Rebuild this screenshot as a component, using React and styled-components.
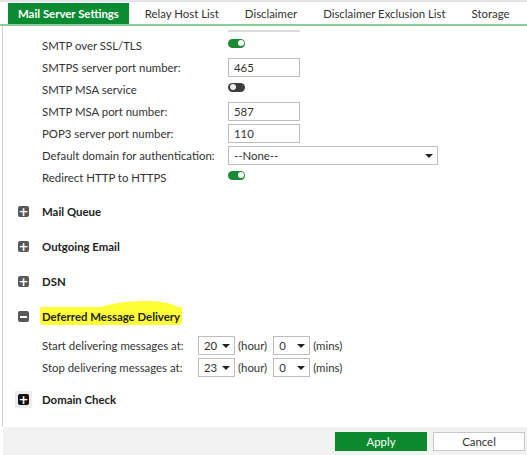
import React from "react";
import styled, { createGlobalStyle } from "styled-components";

const GlobalStyle = createGlobalStyle`
  body {
    margin: 0;
    background: #fff;
    font-family: Lato, "Open Sans", "Liberation Sans", sans-serif;
    font-size: 11.4px;
    color: #333;
  }
`;

const tabs = [
  "Mail Server Settings",
  "Relay Host List",
  "Disclaimer",
  "Disclaimer Exclusion List",
  "Storage",
];

export default function App() {
  return (
    <Page>
      <GlobalStyle />
      <TabBar>
        {tabs.map((t, i) => (
          <Tab key={t} active={i === 0}>
            {t}
          </Tab>
        ))}
      </TabBar>
      <Panel>
        <CutInput />
        <FormRow>
          <Label>SMTP over SSL/TLS</Label>
          <Toggle on />
        </FormRow>
        <FormRow>
          <Label>SMTPS server port number:</Label>
          <TextBox>465</TextBox>
        </FormRow>
        <FormRow>
          <Label>SMTP MSA service</Label>
          <Toggle />
        </FormRow>
        <FormRow>
          <Label>SMTP MSA port number:</Label>
          <TextBox>587</TextBox>
        </FormRow>
        <FormRow>
          <Label>POP3 server port number:</Label>
          <TextBox>110</TextBox>
        </FormRow>
        <FormRow>
          <Label>Default domain for authentication:</Label>
          <Select width={210}>
            --None--
            <Caret />
          </Select>
        </FormRow>
        <FormRow>
          <Label>Redirect HTTP to HTTPS</Label>
          <Toggle on />
        </FormRow>

        <Sections>
          <Section>
            <SectionIcon>+</SectionIcon>
            <SectionTitle>Mail Queue</SectionTitle>
          </Section>
          <Section>
            <SectionIcon>+</SectionIcon>
            <SectionTitle>Outgoing Email</SectionTitle>
          </Section>
          <Section>
            <SectionIcon>+</SectionIcon>
            <SectionTitle>DSN</SectionTitle>
          </Section>
          <Section>
            <SectionIcon>
              <MinusBar />
            </SectionIcon>
            <SectionTitle>
              <Highlight>Deferred Message Delivery</Highlight>
            </SectionTitle>
          </Section>

          <TimeRow>
            <TimeLabel>Start delivering messages at:</TimeLabel>
            <Select width={37}>
              20
              <Caret />
            </Select>
            <Unit>(hour)</Unit>
            <Select width={37}>
              0
              <Caret />
            </Select>
            <Unit>(mins)</Unit>
          </TimeRow>
          <TimeRow>
            <TimeLabel>Stop delivering messages at:</TimeLabel>
            <Select width={37}>
              23
              <Caret />
            </Select>
            <Unit>(hour)</Unit>
            <Select width={37}>
              0
              <Caret />
            </Select>
            <Unit>(mins)</Unit>
          </TimeRow>

          <Section spaced>
            <IconWell>
              <SectionIcon dark>+</SectionIcon>
            </IconWell>
            <SectionTitle>Domain Check</SectionTitle>
          </Section>
        </Sections>
      </Panel>
      <Footer>
        <Button primary>Apply</Button>
        <Button>Cancel</Button>
      </Footer>
    </Page>
  );
}

const Page = styled.div`
  width: 527px;
  height: 455px;
  display: flex;
  flex-direction: column;
  border-top: 2px solid #e4e4e4;
  box-sizing: border-box;
  overflow: hidden;
`;

const TabBar = styled.div`
  display: flex;
  gap: 6px;
  padding: 1px 0 0 8px;
  height: 21px;
  border-bottom: 2px solid #86cf98;
`;

const Tab = styled.div`
  display: flex;
  align-items: center;
  padding: 0 10px;
  white-space: nowrap;
  color: ${(p) => (p.active ? "#fff" : "#333")};
  background: ${(p) => (p.active ? "#0a8a32" : "transparent")};
  font-weight: ${(p) => (p.active ? 700 : 400)};
`;

const Panel = styled.div`
  flex: 1;
  border-left: 1px solid #d0d0d0;
  margin-left: 2px;
  padding: 4px 0 0 39px;
`;

const CutInput = styled.div`
  margin-left: 186px;
  width: 72px;
  height: 2px;
  background: #dcdcdc;
  margin-bottom: 2px;
`;

const FormRow = styled.div`
  display: flex;
  align-items: center;
  height: 22px;
`;

const Label = styled.div`
  width: 186px;
  white-space: nowrap;
`;

const Toggle = styled.span`
  position: relative;
  width: 17px;
  height: 9px;
  border-radius: 5px;
  background: ${(p) => (p.on ? "#1a8a34" : "#3d3d3d")};
  margin-top: -4px;
  &::after {
    content: "";
    position: absolute;
    top: 1.5px;
    ${(p) => (p.on ? "right: 1.5px;" : "left: 1.5px;")}
    width: 6px;
    height: 6px;
    border-radius: 50%;
    background: ${(p) => (p.on ? "#fff" : "#eee")};
  }
`;

const TextBox = styled.div`
  width: 72px;
  height: 19px;
  box-sizing: border-box;
  border: 1px solid #bdbdbd;
  padding: 0 5px;
  line-height: 17px;
`;

const Select = styled.div`
  position: relative;
  width: ${(p) => p.width}px;
  height: 19px;
  box-sizing: border-box;
  border: 1px solid #bdbdbd;
  padding: 0 5px;
  line-height: 17px;
  background: #fff;
`;

const Caret = styled.span`
  position: absolute;
  right: 4px;
  top: 7px;
  width: 0;
  height: 0;
  border-left: 4px solid transparent;
  border-right: 4px solid transparent;
  border-top: 4px solid #222;
`;

const Sections = styled.div`
  margin: 6px 0 0 -24px;
`;

const Section = styled.div`
  display: flex;
  align-items: center;
  height: 35px;
  ${(p) => p.spaced && "margin-top: 4px;"}
`;

const IconWell = styled.div`
  display: flex;
  align-items: center;
  justify-content: center;
  width: 17px;
  height: 17px;
  margin: 0 10px 0 -3px;
  background: #ececec;
  & > span {
    margin: 0;
  }
`;

const SectionIcon = styled.span`
  display: flex;
  align-items: center;
  justify-content: center;
  width: 11px;
  height: 11px;
  border-radius: 2px;
  background: ${(p) => (p.dark ? "#111" : "#585858")};
  color: #fff;
  font-size: 12px;
  font-weight: 900;
  line-height: 1;
  margin-right: 13px;
  font-family: "DejaVu Sans", sans-serif;
`;

const MinusBar = styled.span`
  width: 7px;
  height: 2px;
  background: #fff;
`;

const SectionTitle = styled.div`
  font-weight: 700;
  color: #222;
`;

const Highlight = styled.span`
  position: relative;
  z-index: 0;
  padding: 3px 2px 2px;
  margin-left: -2px;
  background: #ffff36;
  border-radius: 2px 0 4px 3px;
  &::after {
    content: "";
    position: absolute;
    z-index: -1;
    right: 0;
    top: -6px;
    width: 90px;
    height: 14px;
    background: #ffff36;
    border-radius: 60% 40% 0 0 / 100% 80% 0 0;
  }
`;

const TimeRow = styled.div`
  display: flex;
  align-items: center;
  height: 22px;
  padding-left: 24px;
`;

const TimeLabel = styled.div`
  width: 156px;
  white-space: nowrap;
`;

const Unit = styled.span`
  margin: 0 6px 0 3px;
`;

const Footer = styled.div`
  display: flex;
  justify-content: flex-end;
  align-items: center;
  gap: 6px;
  height: 28px;
  padding-right: 2px;
  margin-left: 3px;
  background: #f2f2f2;
`;

const Button = styled.div`
  width: 92px;
  height: 19px;
  box-sizing: border-box;
  display: flex;
  align-items: center;
  justify-content: center;
  color: ${(p) => (p.primary ? "#fff" : "#333")};
  background: ${(p) => (p.primary ? "#0a8a2c" : "#fff")};
  border: 1px solid ${(p) => (p.primary ? "#0a8a2c" : "#c8c8c8")};
`;
